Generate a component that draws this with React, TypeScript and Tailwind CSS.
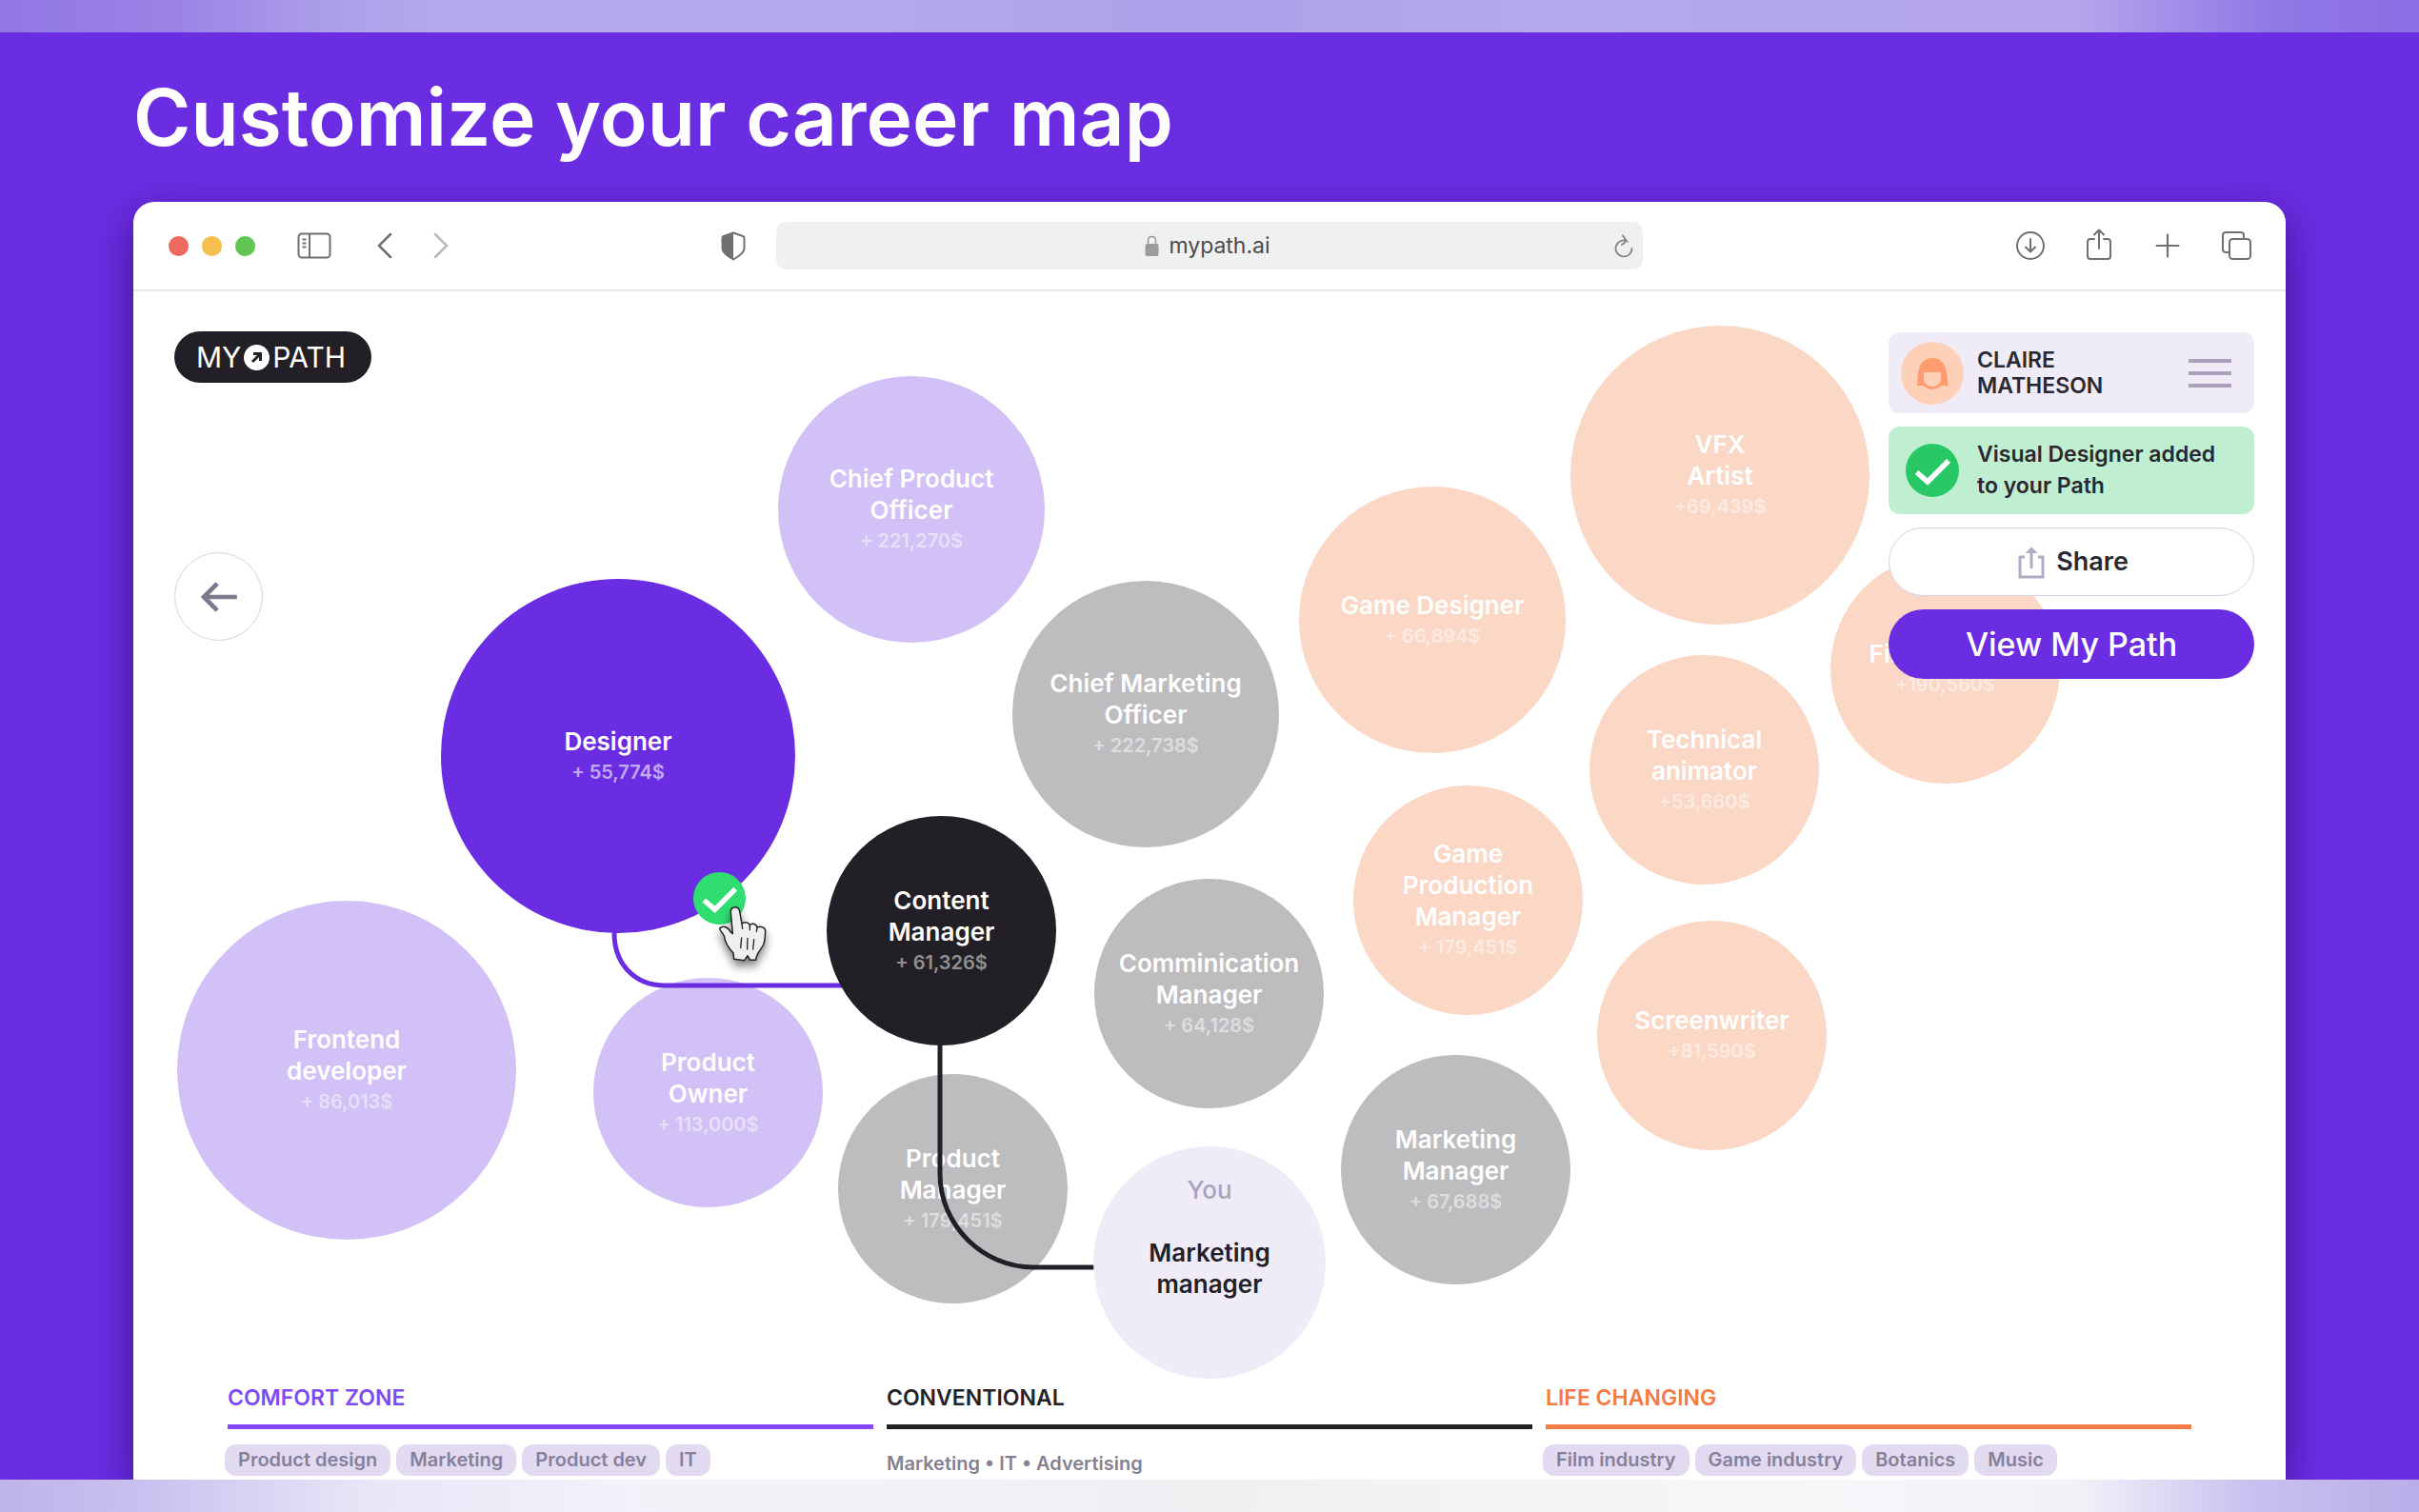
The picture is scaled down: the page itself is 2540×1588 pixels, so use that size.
import React from "react";

type Tone = "lilac" | "purple" | "grey" | "black" | "peach";

interface Role {
  title: string[];
  pay: string;
  x: number;
  y: number;
  size: number;
  tone: Tone;
}

const toneClass: Record<Tone, string> = {
  lilac: "bg-[#d2c1f6]",
  purple: "bg-[#6b2de2]",
  grey: "bg-[#bdbdbf]",
  black: "bg-[#222026]",
  peach: "bg-[#fbd7c6]",
};

const payClass: Record<Tone, string> = {
  lilac: "text-white/50",
  purple: "text-white/60",
  grey: "text-white/50",
  black: "text-white/50",
  peach: "text-white/50",
};

const mutedRoles: Role[] = [
  { title: ["Chief Product", "Officer"], pay: "+ 221,270$", x: 677, y: 89, size: 280, tone: "lilac" },
  { title: ["Frontend", "developer"], pay: "+ 86,013$", x: 46, y: 640, size: 356, tone: "lilac" },
  { title: ["Product", "Owner"], pay: "+ 113,000$", x: 483, y: 721, size: 241, tone: "lilac" },
  { title: ["Chief Marketing", "Officer"], pay: "+ 222,738$", x: 923, y: 304, size: 280, tone: "grey" },
  { title: ["Comminication", "Manager"], pay: "+ 64,128$", x: 1009, y: 617, size: 241, tone: "grey" },
  { title: ["Product", "Manager"], pay: "+ 179,451$", x: 740, y: 822, size: 241, tone: "grey" },
  { title: ["Marketing", "Manager"], pay: "+ 67,688$", x: 1268, y: 802, size: 241, tone: "grey" },
  { title: ["Game Designer"], pay: "+ 66,894$", x: 1224, y: 205, size: 280, tone: "peach" },
  { title: ["VFX", "Artist"], pay: "+69,439$", x: 1509, y: 36, size: 314, tone: "peach" },
  { title: ["Film Director"], pay: "+190,560$", x: 1782, y: 276, size: 241, tone: "peach" },
  { title: ["Technical", "animator"], pay: "+53,660$", x: 1529, y: 382, size: 241, tone: "peach" },
  { title: ["Game", "Production", "Manager"], pay: "+ 179,451$", x: 1281, y: 519, size: 241, tone: "peach" },
  { title: ["Screenwriter"], pay: "+81,590$", x: 1537, y: 661, size: 241, tone: "peach" },
];

const pathRoles: Role[] = [
  { title: ["Designer"], pay: "+ 55,774$", x: 323, y: 302, size: 372, tone: "purple" },
  { title: ["Content", "Manager"], pay: "+ 61,326$", x: 728, y: 551, size: 241, tone: "black" },
];

function Bubble({ role }: { role: Role }) {
  return (
    <button
      type="button"
      className={`absolute flex flex-col items-center justify-center rounded-full pt-px text-white ${toneClass[role.tone]}`}
      style={{ left: role.x, top: role.y, width: role.size, height: role.size }}
    >
      {role.title.map((line) => (
        <span key={line} className="whitespace-nowrap text-[26px] leading-[33px] font-semibold">
          {line}
        </span>
      ))}
      <span className={`text-[20px] leading-[33px] font-semibold ${payClass[role.tone]}`}>{role.pay}</span>
    </button>
  );
}

function Connections() {
  return (
    <svg className="pointer-events-none absolute top-0 left-0" width="1100" height="1140" fill="none" strokeWidth="5">
      <path d="M505 660V674C505 706 526 729 558 729H760" stroke="#6b2de2" />
      <path d="M847 780V927C847 981 892 1025 945 1025H1012" stroke="#222026" />
    </svg>
  );
}

function Check({ className }: { className: string }) {
  return (
    <svg viewBox="0 0 56 56" className={className} fill="none">
      <circle cx="28" cy="28" r="28" fill="currentColor" />
      <path d="M11.500 30L23 40L45 18" stroke="#fff" strokeWidth="5.500" />
    </svg>
  );
}

function HandCursor() {
  return (
    <svg
      viewBox="165 207 159 186"
      className="pointer-events-none absolute top-[644px] left-[614px] h-[62px] w-[53px] overflow-visible drop-shadow-[0_6px_5px_rgba(0,0,0,0.5)]"
      stroke="#242424"
      strokeWidth="4.500"
      strokeLinejoin="round"
      strokeLinecap="round"
    >
      <path
        fill="#efefef"
        d="M211 299L205 232C203 212 229 210 233 228L240 268C246 261 262 262 265 272C271 265 284 266 288 279C299 274 315 279 314 292C313 306 313 321 308 333C303 347 286 357 284 382H266L258 368L248 383L215 379L213 360C198 344 187 329 184 306C180 296 171 292 170 282C179 272 196 277 204 293Z"
      />
      <path fill="none" strokeWidth="4" d="M240 269L242 283M265 273V287M288 280L286 292M239 312L236 344M258 313L257 348M278 317L275 348" />
    </svg>
  );
}

function Toolbar() {
  return (
    <header className="grid h-[94px] shrink-0 grid-cols-[1fr_910px_1fr] items-center border-b-2 border-[#e8e8e8] text-[#707070]">
      <div className="flex items-center pr-8 pl-[37px]">
        <div className="flex gap-3.5">
          <button type="button" aria-label="Close" className="size-[21px] rounded-full bg-[#ee6a5f]" />
          <button type="button" aria-label="Minimize" className="size-[21px] rounded-full bg-[#f5be4f]" />
          <button type="button" aria-label="Zoom" className="size-[21px] rounded-full bg-[#61c554]" />
        </div>
        <button type="button" aria-label="Sidebar" className="ml-11">
          <svg width="36" height="28" viewBox="0 0 36 28" fill="none" stroke="currentColor" strokeWidth="2">
            <rect x="1.500" y="1.500" width="33" height="25" rx="3.500" />
            <path d="M13 1.500V26.500M5.500 7.500H9.500M5.500 11.500H9.500M5.500 15.500H9.500" />
          </svg>
        </button>
        <button type="button" aria-label="Back" className="ml-12">
          <svg width="16" height="28" viewBox="0 0 16 28" fill="none" stroke="currentColor" strokeWidth="2.500" strokeLinecap="round">
            <path d="M14 2L2 14L14 26" />
          </svg>
        </button>
        <button type="button" aria-label="Forward" className="ml-[43px] text-[#b9b9b9]">
          <svg width="16" height="28" viewBox="0 0 16 28" fill="none" stroke="currentColor" strokeWidth="2.500" strokeLinecap="round">
            <path d="M2 2L14 14L2 26" />
          </svg>
        </button>
        <button type="button" aria-label="Privacy report" className="ml-auto">
          <svg width="26" height="31" viewBox="0 0 26 31" fill="none" stroke="currentColor" strokeWidth="2">
            <path d="M13 1.500L23 5Q24.500 5.500 24.500 7V18Q24.500 23 13 29.500Q1.500 23 1.500 18V7Q1.500 5.500 3 5Z" strokeLinejoin="round" />
            <path d="M13 1.500L3 5Q1.500 5.500 1.500 7V18Q1.500 23 13 29.500Z" fill="currentColor" stroke="none" />
          </svg>
        </button>
      </div>
      <div className="flex h-[50px] items-center rounded-[10px] bg-[#f0f0f0] px-2.5">
        <span className="w-4" />
        <div className="flex flex-1 items-center justify-center gap-2.5 text-[23px] text-[#4b4b4b]">
          <svg width="15" height="22" viewBox="0 0 15 22" fill="none">
            <path d="M3.500 10V6C3.500 0 11.500 0 11.500 6V10" stroke="#9b9b9b" strokeWidth="1.500" />
            <rect x="0.500" y="9" width="14" height="13" rx="2" fill="#9b9b9b" />
          </svg>
          <span>mypath.ai</span>
        </div>
        <button type="button" aria-label="Reload">
          <svg width="20" height="25" viewBox="0 0 20 25" fill="none" stroke="#858585" strokeWidth="1.800" strokeLinecap="round">
            <path d="M18.500 15A8.500 8.500 0 1 1 13 7L9 1.500M13 7L8 11" />
          </svg>
        </button>
      </div>
      <div className="flex items-center justify-end gap-10 pr-[34px]">
        <button type="button" aria-label="Downloads">
          <svg width="32" height="36" viewBox="0 0 32 36" fill="none" stroke="currentColor" strokeWidth="2" strokeLinecap="round" strokeLinejoin="round">
            <circle cx="16" cy="18" r="14" />
            <path d="M16 11V24M11 19.500L16 24.500L21 19.500" />
          </svg>
        </button>
        <button type="button" aria-label="Share page">
          <svg width="32" height="36" viewBox="0 0 32 36" fill="none" stroke="currentColor" strokeWidth="2" strokeLinecap="round" strokeLinejoin="round">
            <path d="M11 11H7Q4 11 4 14V29Q4 32 7 32H25Q28 32 28 29V14Q28 11 25 11H21M16 21V1.500M11 6.500L16 1.500L21 6.500" />
          </svg>
        </button>
        <button type="button" aria-label="New tab">
          <svg width="32" height="36" viewBox="0 0 32 36" fill="none" stroke="currentColor" strokeWidth="2.200" strokeLinecap="round">
            <path d="M16 6.500V29.500M4.500 18H27.500" />
          </svg>
        </button>
        <button type="button" aria-label="Tab overview">
          <svg width="34" height="36" viewBox="0 0 34 36" fill="none" stroke="currentColor" strokeWidth="2" strokeLinejoin="round">
            <rect x="9" y="11" width="22" height="21" rx="3.500" />
            <path d="M9 25H5.500Q2 25 2 21.500V7Q2 4 5.500 4H20.500Q24 4 24 7V11" />
          </svg>
        </button>
      </div>
    </header>
  );
}

function SidePanel() {
  return (
    <aside className="absolute top-[43px] right-[33px] flex w-96 flex-col gap-3.5 text-[#2a2830]">
      <div className="flex h-[85px] items-center rounded-xl bg-[#efebf7] pr-6 pl-[13px]">
        <svg width="66" height="66" viewBox="0 0 66 66">
          <circle cx="33" cy="33" r="33" fill="#ffd0b8" />
          <path d="M17 46C18 38 16 17 33 17C50 17 48 38 50 46C46 47 44 45 41 47C36 51 30 51 25 47C23 45 20 47 17 46Z" fill="#ff9d70" />
          <path d="M24 32H42V38C42 50 24 50 24 38Z" fill="#ffd0b8" />
        </svg>
        <p className="ml-3.5 flex-1 text-[23px] leading-[27px] font-semibold">
          CLAIRE
          <br />
          MATHESON
        </p>
        <button type="button" aria-label="Menu" className="flex w-[45px] flex-col gap-[9px]">
          <span className="h-1 bg-[#aaa2ba]" />
          <span className="h-1 bg-[#aaa2ba]" />
          <span className="h-1 bg-[#aaa2ba]" />
        </button>
      </div>
      <div role="status" className="flex h-[92px] items-center gap-[19px] rounded-xl bg-[#c0eed1] pl-[18px]">
        <Check className="size-14 shrink-0 text-[#28c866]" />
        <p className="text-[23px] leading-[33px] font-semibold whitespace-nowrap">
          Visual Designer added
          <br />
          to your Path
        </p>
      </div>
      <button
        type="button"
        className="flex h-[72px] items-center justify-center gap-3 rounded-full border border-[#d6d2e6] bg-white pt-px pl-1 text-[27px] font-semibold"
      >
        <svg width="28" height="34" viewBox="0 0 28 34" fill="none" stroke="#b1abc6" strokeWidth="3">
          <path d="M7 11H2V32H26V11H21M14 23V4" />
          <path d="M14 0.500L20.500 7H7.500Z" fill="#b1abc6" stroke="none" />
        </svg>
        Share
      </button>
      <button type="button" className="h-[73px] rounded-full bg-[#6b2de2] text-[34px] font-medium text-white">
        View My Path
      </button>
    </aside>
  );
}

function Tags({ items }: { items: string[] }) {
  return (
    <ul className="-ml-[3px] flex gap-1.5">
      {items.map((item) => (
        <li key={item} className="rounded-xl bg-[#e2daf1] px-3.5 text-[20px] leading-[33px] font-semibold whitespace-nowrap text-[#86809a]">
          {item}
        </li>
      ))}
    </ul>
  );
}

function Legend() {
  return (
    <section className="grid grid-cols-3 gap-3.5 px-[99px] text-[23px] leading-[27px] font-semibold">
      <div>
        <h2 className="text-[#7e4bf2]">COMFORT ZONE</h2>
        <div className="mt-3.5 mb-4 h-[5px] bg-[#8447fa]" />
        <Tags items={["Product design", "Marketing", "Product dev", "IT"]} />
      </div>
      <div>
        <h2 className="text-[#242226]">CONVENTIONAL</h2>
        <div className="mt-3.5 mb-4 h-[5px] bg-[#222222]" />
        <p className="pt-1 text-[20px] leading-[33px] text-[#858191]">Marketing • IT • Advertising</p>
      </div>
      <div>
        <h2 className="text-[#f47b45]">LIFE CHANGING</h2>
        <div className="mt-3.5 mb-4 h-[5px] bg-[#f47b45]" />
        <Tags items={["Film industry", "Game industry", "Botanics", "Music"]} />
      </div>
    </section>
  );
}

export default function App() {
  return (
    <div className="flex min-h-screen flex-col overflow-hidden bg-[#6b2de2] font-['Inter','Liberation_Sans',sans-serif]">
      <div className="h-[34px] shrink-0 bg-[linear-gradient(90deg,#9178e4_0%,#9a82e6_7%,#ab9ce9_13%,#b5a8ec_18%,#b5a8ec_36%,#ada0e9_50%,#b5a8ec_64%,#b3a4ec_86%,#9078e6_94%,#8a6ee4_100%)]" />
      <main className="flex flex-1 flex-col px-[140px]">
        <h1 className="pt-[43px] pb-[41px] text-[82px] leading-[94px] font-semibold whitespace-nowrap text-white">Customize your career map</h1>
        <div className="flex flex-1 flex-col rounded-t-[22px] bg-white shadow-[0_14px_44px_rgba(30,0,90,0.6)]">
          <Toolbar />
          <div className="relative h-[1149px] shrink-0">
            {mutedRoles.map((role) => (
              <Bubble key={role.title.join(" ")} role={role} />
            ))}
            <Connections />
            {pathRoles.map((role) => (
              <Bubble key={role.title.join(" ")} role={role} />
            ))}
            <button
              type="button"
              className="absolute top-[898px] left-[1008px] flex size-[244px] flex-col items-center rounded-full bg-[#efebf7] pt-[29px] text-[26px] leading-[33px] font-semibold text-[#222026]"
            >
              <span className="mb-[33px] font-medium text-[#a9a3bb]">You</span>
              <span>Marketing</span>
              <span>manager</span>
            </button>
            <Check className="absolute top-[610px] left-[588px] size-[55px] text-[#2fdd70]" />
            <HandCursor />
            <a
              href="#home"
              className="absolute top-[42px] left-[43px] flex h-[54px] w-[207px] items-center justify-center gap-[3px] rounded-full bg-[#222026] pr-1 text-[30px] text-white"
            >
              MY
              <svg width="27" height="27" viewBox="0 0 27 27" fill="none">
                <circle cx="13.500" cy="13.500" r="13.500" fill="#fff" />
                <path d="M9 18L17 10M10 9.500H17.500V17" stroke="#222026" strokeWidth="3" />
              </svg>
              PATH
            </a>
            <button
              type="button"
              aria-label="Previous"
              className="absolute top-[274px] left-[43px] flex size-[93px] items-center justify-center rounded-full border border-[#d6d2e6] bg-white"
            >
              <svg width="40" height="32" viewBox="0 0 42 34" fill="none" stroke="#7f798f" strokeWidth="5">
                <path d="M41 17H5M19 2L4 17L19 32" />
              </svg>
            </button>
            <SidePanel />
          </div>
          <Legend />
        </div>
      </main>
      <div className="h-[34px] shrink-0 bg-[linear-gradient(90deg,#bdb4ea_0%,#c9c1ef_6%,#e9e5f7_15%,#f3f2fa_26%,#f0f0f3_50%,#f8f6f9_76%,#f3f0f8_86%,#c9c1ef_93%,#b9aee8_100%)]" />
    </div>
  );
}
